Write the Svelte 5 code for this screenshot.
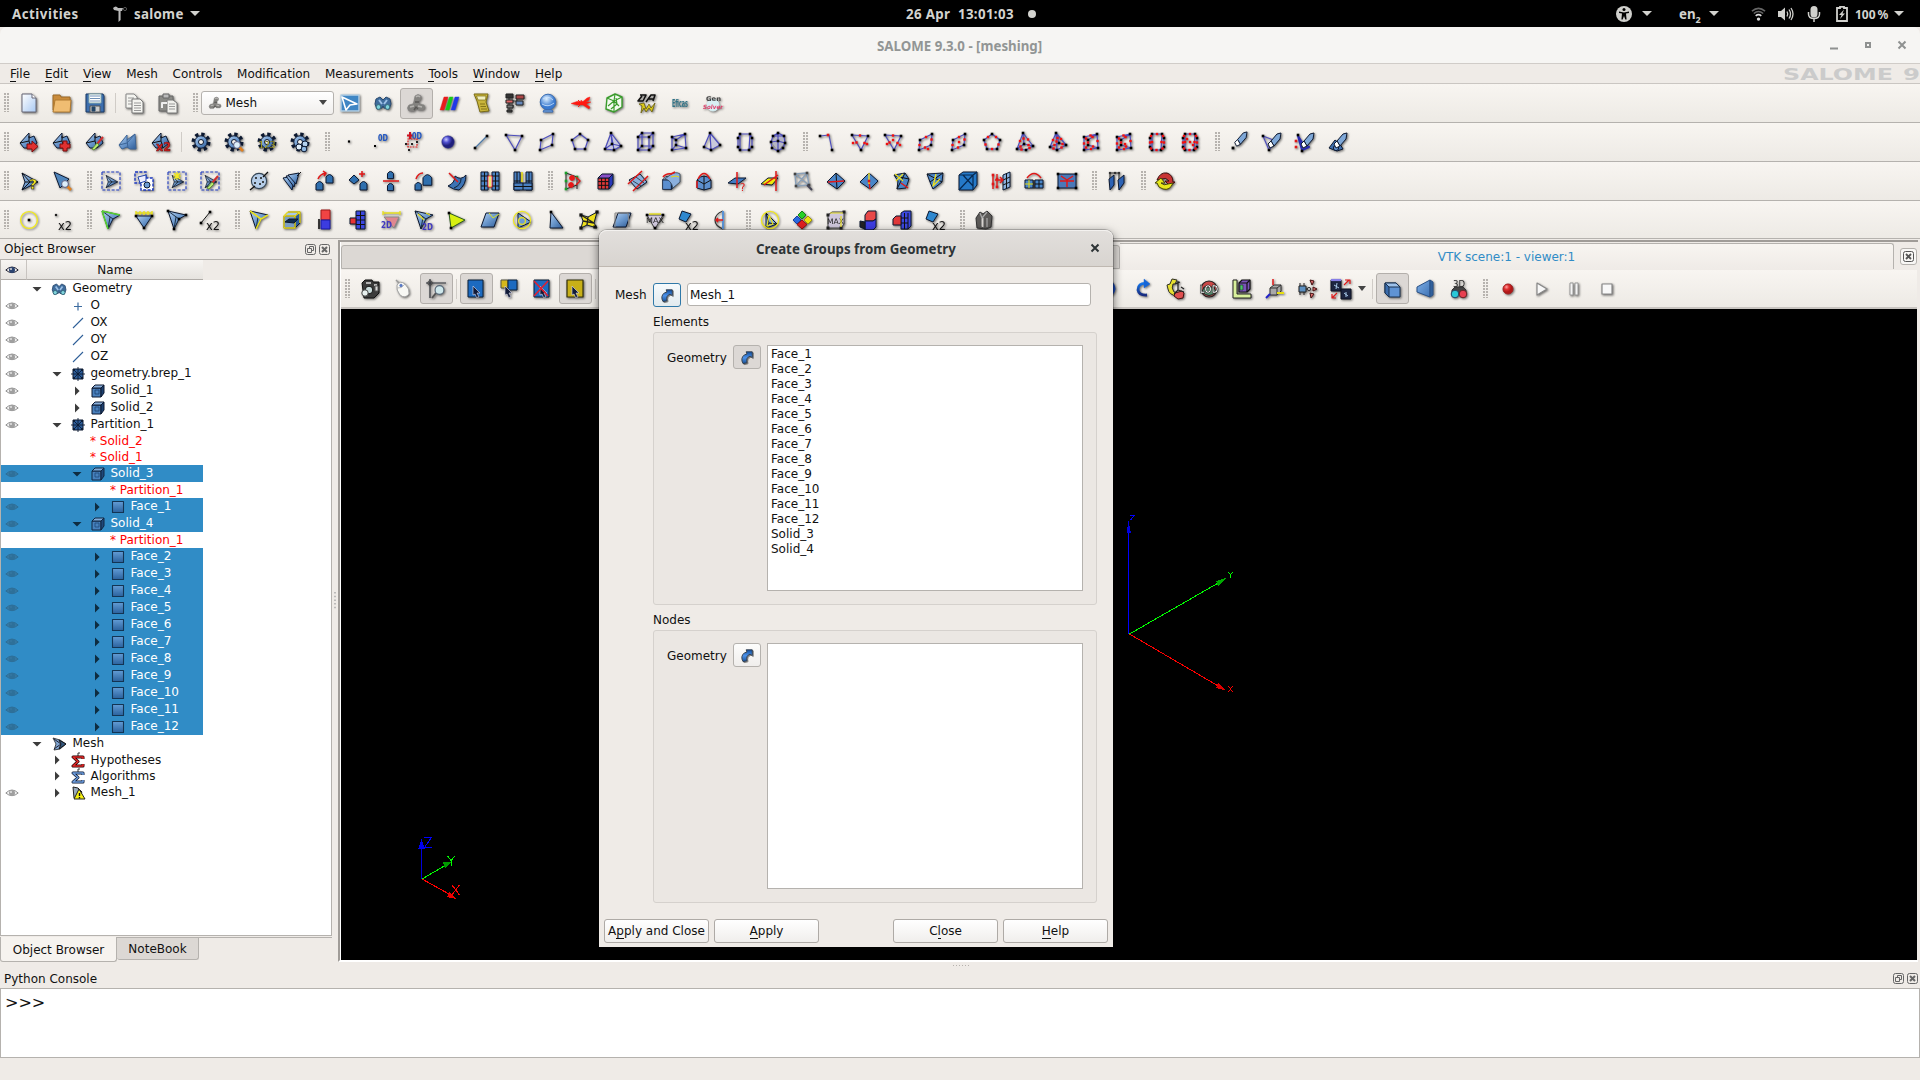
<script lang="ts">
  type Pt = [number, number];

  const B = 'url(#gBlue)';
  const p = (d: string, f = B, s = '#0c1830', w = 1) =>
    `<path d="${d}" fill="${f}" stroke="${s}" stroke-width="${w}" stroke-linejoin="round"/>`;
  const l = (d: string, s = '#111', w = 1) => p(d, 'none', s, w);
  const c = (x: number, y: number, r: number, f = B, s = '#0c1830', w = 1) =>
    `<circle cx="${x}" cy="${y}" r="${r}" fill="${f}" stroke="${s}" stroke-width="${w}"/>`;
  const t = (x: number, y: number, txt: string, size: number, f = '#111', extra = '') =>
    `<text x="${x}" y="${y}" font-size="${size}" fill="${f}" ${extra}>${txt}</text>`;
  const fit = (w: number) => `textLength="${w}" lengthAdjust="spacingAndGlyphs"`;
  const dots = (pts: Pt[], f = '#000', r = 1.3) =>
    pts.map(([x, y]) => `<rect x="${x - r}" y="${y - r}" width="${2 * r}" height="${2 * r}" fill="${f}"/>`).join('');

  // Wireframe element: black corner nodes, optional red mid-side nodes
  function wf(pts: Pt[], edges: string, quad = false, extra: Pt[] = []) {
    const es = edges.split(' ').map((e) => [pts[+e[0]], pts[+e[1]]]);
    const lines = es.map(([a, b]) => `M${a[0]} ${a[1]}L${b[0]} ${b[1]}`).join('');
    const mids = quad ? es.map(([a, b]) => [(a[0] + b[0]) / 2, (a[1] + b[1]) / 2] as Pt) : [];
    return l(lines, '#4d4dbd', 1.2) + dots(pts) + dots([...mids, ...extra], '#f01010', 1.2);
  }

  const TRI: Pt[] = [[2, 3], [18, 4], [11, 18]];
  const QUAD: Pt[] = [[4, 8], [16, 2], [15, 13], [3, 18]];
  const PENT: Pt[] = [[10, 2], [18, 8], [15, 17], [5, 17], [2, 8]];
  const TET: Pt[] = [[8, 1], [18, 14], [11, 18], [2, 17], [9, 12]];
  const HEX: Pt[] = [[2, 5], [13, 5], [13, 18], [2, 18], [6, 1], [17, 1], [17, 14], [6, 14]];
  const PRI: Pt[] = [[3, 5], [16, 2], [17, 16], [3, 18], [7, 8], [7, 13]];
  const HEXP: Pt[] = [[5, 2], [15, 2], [17, 6], [17, 15], [14, 18], [5, 18], [3, 15], [3, 6]];
  const HE = '01 12 23 30 45 56 67 74 04 15 26 37';
  const PE = '01 12 23 30 04 14 45 35 25';
  const TE = '01 12 23 30 02 04 14 34';
  const XE = '01 12 23 34 45 56 67 70 05 14';

  const blob = p('M1 11L10 1L10 6L15 4L18 11L12 16L5 16Z') + l('M1 11L10 9L10 4M10 9L12 16');
  const plane = p('M3 2L19 11L3 19L6 11Z') + l('M6 11L19 11M3 2L11 11L3 19');
  const gear =
    `<circle cx="10" cy="10" r="7.4" fill="none" stroke="#0c1830" stroke-width="4.2" stroke-dasharray="3.1 2.71"/>` +
    c(10, 10, 6.2) + c(10, 10, 2.5, '#f5f2ee');
  const glass = l('M15 15L19 19', '#e08020', 2.6) + c(13, 13, 3.4, '#dceefa', '#557', 0.9);
  const eraser = p('M9 9L15 2L19 1L18 7L12 14Z', '#7fa8d8') + p('M9 9L12 14L8 16L6 12Z', '#fff');
  const brush = l('M18 5L12 12', '#d03030', 2) + p('M12 11L14 13L9 18L7 17Z', '#b8e870', '#4a8020', 0.7);
  const frame = `<rect x="1" y="1" width="18" height="18" fill="none" stroke="#1c38c0" stroke-width="1.1" stroke-dasharray="3 1.6"/>`;
  const small = `<g transform="translate(3 3) scale(.72)">${plane}</g>`;
  const dome = (x: number, y: number, s = 1) =>
    p(`M${x} ${y + 9 * s}V${y + 3 * s}Q${x + 3.5 * s} ${y - 2 * s} ${x + 7 * s} ${y + 3 * s}V${y + 9 * s}Z`, '#2f6fae');
  const redArrow = (d: string) => l(d, '#e01818', 1.5);
  const tri3 = p('M1 1L19 5L12 9L7 19Z') + l('M1 1L12 9M7 19L9 7', '#123', 0.9);
  const vtri = p('M2 6H18L10 18Z');
  const lean = p('M6 3H19L14 17H1Z');
  const x2 = (x = 6, y = 19) => t(x, y, 'x2', 13, '#111', fit(14));
  const grid = (f: string, x: number, y: number, w: number, h: number) =>
    p(`M${x} ${y}h${w}v${h}h${-w}z`, f) + l(`M${x + w / 2} ${y}v${h}M${x} ${y + h / 2}h${w}`);
  const cube = (f = '#5b8fd0') =>
    p('M2 6H13V18H2Z', f) + p('M2 6L6 2H18L13 6Z', '#a9c8ec') + p('M13 6L18 2V13L13 18Z', '#2b5c9c');
  const cell = (inner: string, dx: number, dy: number, s: number) => `<g transform="translate(${dx} ${dy}) scale(${s})">${inner}</g>`;
  const cursor = (x: number, y: number) =>
    p(`M${x} ${y}L${x + 7} ${y + 7}H${x + 4}L${x + 6} ${y + 11}L${x + 3.5} ${y + 11.5}L${x + 2} ${y + 8}L${x} ${y + 9}Z`, '#111a38', '#dde', 0.6);

  const I: Record<string, string> = {
    new: p('M3 1H13L17 5V19H3Z', 'url(#gPage)', '#667') + p('M13 1V5H17', '#fff', '#667'),
    open: p('M1 2H8L9 4H18V17H1Z', '#c98b3b', '#9c6a28') + p('M3 7H19L18 19H1Z', '#f0bd72', '#b07a30'),
    save: p('M1 1H18L19 3V19H1Z', '#3d6fae', '#1b3b66') + p('M4 1H16V10H4Z', '#fff', '#8aa') + l('M5 3H15M5 5.5H15M5 8H15', '#7090b8') + p('M5 13H15V19H5Z', '#ccc', '#555') + p('M7 14H10V18H7Z', '#246', '#246'),
    copy: p('M1 1H9L12 4V15H1Z', '#f4f4f0', '#888') + l('M3 5H9M3 8H9M3 11H7', '#999') + p('M7 6H15L18 9V20H7Z', '#f4f4f0', '#777') + l('M9 10H16M9 12.5H16M9 15H16M9 17.5H16', '#999'),
    paste: p('M1 3H15V18H1Z', '#8b8b87', '#666') + p('M5 1H11V5H5Z', '#bbb', '#666') + p('M9 7H15L19 10V20H9Z', '#f0f0ec', '#777') + l('M11 11H17M11 13.5H17M11 16H17', '#999') + l('M4 15V10H9', '#eee', 2),
    shaper: p('M1 2H19V18H1Z', '#3f86c4', '#b5cfe4', 1.4) + p('M2 4L17 11L10 12L6 17Z', 'none', '#fff', 1.6),
    geom: p('M3 6L7 4L10 7L13 4L17 6L18 11L16 16L11 15L10 13L9 15L4 16L2 11Z', '#3f6c9c', '#2a4a70') + c(5.5, 14, 2.4, '#7fd3dc', '#367') + c(14.5, 14, 2.4, '#7fd3dc', '#367') + l('M6 7L9 11M14 7L11 11', '#9cc0e6', 2),
    mesh: p('M9 3Q12 0 15 3Q16 6 13 8L13 11L18 12Q20 15 17 17H12L10 15L8 18H3Q0 15 3 12L7 11L8 8Z', '#83827f', '#83827f', 0.6) + l('M10 4Q12 2 14 4M4 14L8 13M12 13L16 14', '#b5b3b0', 1.6) + l('M9 9L13 9M8 17L10 14L12 16', '#595755', 1.4),
    para: p('M5 4H9L5 17H1Z', '#e81c1c', '#e81c1c', 0.4) + p('M10.5 4H14L10 17H6.5Z', '#18c818', '#18c818', 0.4) + p('M16 4H20L16 17H12Z', '#2038e8', '#2038e8', 0.4),
    calc: p('M2 1H16L14 9L17 18L8 19L5 8Z', '#c9b53b', '#7a6c16') + p('M4.5 3H14L13.500 7H6Z', '#f0efc0', '#7a6c16', 0.7) + l('M8 11H13M8.500 13.5H14M9 16H15', '#857518', 1.1),
    yacs: l('M4 4V18M4 8H12M4 13H9M12 4H17M12 9V4', '#333') + p('M1 1H8V5H1Z', '#333', '#222') + p('M11 2H19V6H11Z', '#a44', '#222') + p('M1 7H8V10H1Z', '#d66', '#222') + p('M11 8H18V12H11Z', '#68b', '#222') + p('M2 12H8V15H2Z', '#777', '#222') + p('M2 17H7V19H2Z', '#444', '#222'),
    globe: c(10, 9, 7.8, 'url(#gBall)', '#3a6db4') + l('M5 6Q10 2 15 7M4 11Q10 15 16 10', '#cfe6ff', 0.8) + p('M6 17H14L15 19H5Z', '#7da7dd', '#3a6db4'),
    cray: p('M0 10.5L6 8.500L12 8.5L16 5L19 4L18 7L15 9L20 9L15 11L19 14L18 16L12 12L6 12Z', '#ff1a12', '#ff1a12', 0.4) + l('M7 7L9 9M7 14L10 11M10 7L11 9', '#ff1a12'),
    hexo: p('M3 5L11 1L18 4V14L10 19L2 16Z', '#f4faf0', '#3a9c2c', 1.4) + l('M3 5L10 8L18 4M10 8V19M11 1L10 8M4 13L10 8L15 13M7 16L13 11L12 5', '#3a9c2c', 1.2),
    da: l('M3 2H9L6 8H1L5 3M9 9L14 2H18L16 8M11 6H16', '#111', 1.6) + p('M2 11L7 10L9 16L12 11L14 15L18 10L15 19L12 15L9 19L7 15L4 20L5 13Z', '#d8c81a', '#5c5208', 0.7),
    eficas: t(2, 14, 'Eficas', 11, '#2f7286', fit(16) + ' font-weight="bold"'),
    gen: c(10, 12, 6, '#d8f0f4', '#d8f0f4') + t(3, 8, 'Gen', 6.5, '#444', fit(15) + ' font-weight="bold"') + t(0, 15.5, 'Solver', 5.8, '#e0406c', fit(20) + ' font-weight="bold" font-style="italic"'),

    mCreate: blob + p('M8 12H13V9L19 14.5L13 20V17H8Z', '#e03030', '#7a0c0c'),
    mSub: blob + p('M11 9H15V12H18V16H15V19H11V16H8V12H11Z', '#e03030', '#7a0c0c'),
    mEdit: blob + brush,
    mBuild: p('M1 13L9 3V8L17 2L18 17H12L9 15L4 17Z', B, '#3c6496') + l('M9 8L10 16M1 13L9 11L17 2', '#3c6496'),
    mCopy: blob + t(5, 19, 'x2', 12, '#d42020', fit(15) + ' font-weight="bold" stroke="#5a0808" stroke-width=".4"'),
    gear, gearFind: gear + glass,
    gear123: gear + t(1.5, 16, '123', 9.5, '#f6f020', fit(17) + ' stroke="#333" stroke-width=".3"'),
    gearBall: gear + c(9, 15, 3, '#dcecfa') + c(15, 12, 3, '#b5d2ee') + c(14, 17, 2.8, '#8fb8e2'),
    node: dots([[10, 9.5]], '#000', 1.1),
    od: dots([[3, 14]], '#000', 1) + t(6, 9, '0D', 9.5, '#1f55c4', fit(10) + ' font-weight="bold"'),
    od2: l('M5 0V7M2 3.5H8', '#d01020', 2) + t(7, 7, '0D', 9.5, '#1f55c4', fit(10) + ' font-weight="bold"') + `<rect x="3" y="7" width="9" height="8" fill="none" stroke="#e01818" stroke-width="1.2" stroke-dasharray="1.8 1"/>` + dots([[1, 12], [7, 12], [4, 18], [12, 10]], '#222', 1),
    ball: c(10, 10, 6.2, 'url(#gNavy)', '#2a2a88', 0.5),
    edge: l('M4 16L16 4', '#4d79a8', 1.3) + dots([[4, 16], [16, 4]]),
    tri: wf(TRI, '01 12 20'), quad: wf(QUAD, '01 12 23 30'), pent: wf(PENT, '01 12 23 34 40'),
    tet: p('M8 1L18 14L11 18L2 17Z', '#c9c9dc', '#888', 0.4) + wf(TET, TE), hexa: wf(HEX, HE), pri: wf(PRI, PE),
    pyr: p('M8 1L18 13L9 18Z', '#c9c9dc', '#888', 0.4) + wf([[8, 1], [18, 13], [9, 18], [2, 15]], '01 12 23 30 02'),
    hexp: wf(HEXP, XE), poly: p('M10 1L16 4L17 11L10 19L3 10Z', '#b5b5c4', '#888', 0.4) + wf([[10, 1], [16, 4], [17, 11], [15, 16], [10, 19], [4, 16], [3, 10], [5, 4], [10, 9]], '01 12 23 34 45 56 67 70 08 28 48 68 17'),
    qEdge: l('M3 4L12 3L15 18', '#4d4dbd', 1.2) + dots([[3, 4], [15, 18]]) + dots([[11, 3]], '#e01818'),
    qTri: wf(TRI, '01 12 20', true, [[17, 12], [3, 11]]), bTri: wf(TRI, '01 12 20', true, [[10, 8], [17, 13], [4, 12]]),
    qQuad: wf(QUAD, '01 12 23 30', true, [[12, 17]]), bQuad: wf(QUAD, '01 12 23 30', true, [[10, 10]]), qPent: wf(PENT, '01 12 23 34 40', true),
    qTet: wf(TET, '01 12 23 30 04 14 34', true), qPyr: wf([[8, 1], [18, 13], [9, 18], [2, 15], [11, 11]], TE, true),
    qPri: wf(PRI, PE, true), bPri: wf(PRI, PE, true, [[11, 12]]), qHex: wf(HEXP, XE, true), bHex: wf(HEXP, XE, true, [[10, 10], [7, 7], [13, 13]]),
    rmNode: cell(eraser, 0, -1, 0.95) + dots([[4, 16]], '#000', 1.4),
    rmElem: l('M1 4L14 9L7 18Z', '#4d4dbd', 1.2) + dots([[1, 4], [7, 18]]) + eraser,
    rmGroup: l('M3 4L8 12L14 15L7 18Z', '#2a2ab0', 2) + dots([[1, 9], [1, 15]], '#e01818') + dots([[3, 3], [7, 19]]) + eraser,
    rmAll: p('M1 16L7 8L12 12L15 17L9 19Z', '#3f6fae') + c(8, 16, 2.6, '#5f8fce') + eraser,

    info: plane + t(10, 18, '?', 14, '#f4e820', 'font-weight="bold" stroke="#222" stroke-width=".5"'),
    find: p('M2 1L17 8L8 17Z', '#4f86bd') + glass,
    grp: frame + small,
    grpGeo: `<rect x="1" y="1" width="11" height="11" fill="none" stroke="#1c38c0" stroke-width="1.4" stroke-dasharray="3 1.4"/><rect x="7" y="7" width="12" height="12" fill="#fff" stroke="#1c38c0" stroke-width="1.4" stroke-dasharray="3 1.4"/>` + p('M4 6L12 4V10L6 12Z', '#eef', '#24a') + c(13, 14, 3, '#6c9bd4'),
    grpNew: frame + small + l('M10 1V9M6 5H14M7 2L13 8M13 2L7 8', '#f2ea20', 1.2),
    grpEdit: frame + small + brush,
    sphere: c(10, 10, 7.6, '#b5cde8', '#345', 1.1) + dots([[7, 7], [12, 7], [6, 12], [11, 13], [14, 11]], '#222', 0.9) + l('M14 6L19 1M6 15L1 19', '#111', 1.3),
    layers: p('M1 7L13 5L10 19Z') + p('M4 5L15 4L12 16Z') + p('M6 4L17 2L14 13Z') + l('M15 5L19 1'),
    mv: dome(1, 10) + dome(11, 3) + redArrow('M3 8Q5 3 11 2M8 0L11 2L9 5'),
    mv2: p('M1 9L6 4L11 9L6 13Z', '#2f6fae') + dome(12, 10) + redArrow('M14 0V6M11 3H17'),
    mir: dome(6.5, 0, 0.85) + dome(6.5, 12, 0.85) + redArrow('M2 10H18'),
    scale: dome(1, 11, 0.9) + dome(9, 3, 1.25) + redArrow('M2 8Q4 2 9 2'),
    sew: p('M8 5Q14 10 19 4Q19 14 12 19Q7 19 1 15Q8 12 8 5Z', '#3c73b4') + l('M14 8Q14 14 7 17', '#123') + redArrow('M2 2L11 11'),
    g1: grid('#4a80c0', 1, 1, 7, 18) + grid('#4a80c0', 12, 1, 7, 18) + l('M1 5H8M1 15H8M12 5H19M12 15H19') + p('M8 5H12V16H8Z', '#fff', '#e01818', 0.9) + l('M10 5V16', '#e4da10', 1.2),
    g2: grid('#4a80c0', 1, 1, 6, 18) + grid('#4a80c0', 13, 1, 6, 18) + grid('#4a80c0', 1, 12, 18, 7) + l('M9 1V11', '#e4da10', 1.6),
    dup: l('M4 2V18M4 2L15 6V18M4 18L15 14', '#222') + dots([[4, 2], [4, 10], [4, 18], [15, 6]], '#18a028') + c(10, 7, 2.4, '#e81818', '#e81818') + c(9, 14, 2.4, '#e81818', '#e81818') + redArrow('M14 6L18 10L14 14'),
    split: p('M3 7H14V18H3Z', '#e03838') + l('M3 10.6H14M3 14.3H14M6.6 7V18M10.3 7V18') + p('M3 7L7 3H18L14 7Z', '#8a50c8') + p('M14 7L18 3V13L14 18Z', '#2838b8'),
    cutx: p('M1 9L12 3L19 11L9 18Z', '#8ab0dc') + redArrow('M0 13L14 0M5 20L20 5') + l('M5 10L13 15M8 6L16 12', '#345'),
    ext: cell(cube(), 0, 4, 0.8) + p('M9 4Q15 0 19 3V11L12 17Q10 9 4 8Z', '#8bb0de', '#345', 0.8) + redArrow('M2 6Q5 2 11 3M14 1L10 3') + l('M10 6Q16 4 18 6', '#e4da10'),
    rev: p('M3 9Q10 1 17 9V17L10 19L3 17Z', '#5c8fce') + l('M10 5V19M3 9L10 13L17 9') + redArrow('M4 8Q10 -3 16 8M3 10V17'),
    plq: p('M1 12L8 7H19L11 13Z', '#3f7cc4') + redArrow('M10 1V17') + t(13, 20, '?', 10, '#e01818'),
    ply: p('M1 13L8 7H18L12 14Z', '#eee80c') + redArrow('M16 0V20M4 14L18 4'),
    wq: l('M2 3L14 2L16 14L3 15ZL16 14M14 2L3 15', '#8aa0b8', 1.4) + dots([[2, 3], [14, 2], [16, 14], [3, 15]], '#444') + l('M14 14L19 19', '#445', 1.8),
    dia: p('M1 11L10 2L19 10L11 18Z', '#4a86c8') + l('M10 2L11 18') + redArrow('M2 11L18 10'),
    dia2: p('M1 11L10 2L19 10L11 18Z', '#4a86c8') + redArrow('M11 18L10 10') + l('M10 2V13', '#eee020', 1.4) + dots([[10, 10]], '#e01818'),
    un: p('M2 4L13 2L17 8L14 17L5 18L6 10Z', '#4a86c8') + l('M3 5L17 8M13 2L5 18') + l('M3 3L11 10M11 3L4 10', '#eee020', 1.3) + redArrow('M9 12L16 17'),
    un2: p('M2 3L18 2L17 11L8 18L5 11Z', '#4a86c8') + l('M2 3L17 11M18 2L5 11') + l('M11 3L8 15L15 8', '#eee020', 1.3),
    cut: p('M1 4L5 1H19V14L15 19H1Z', '#2579c8') + l('M1 4H15V19M15 4L19 1M1 19L15 4M5 4L15 15', '#062850', 1.2),
    pat: p('M12 4L19 1V16L12 19Z', '#8ab0dc') + l('M12 9L19 6M12 14L19 11M15.5 3V17') + l('M2 4V18M6 3V16', '#e01818', 1.4) + redArrow('M4 9H12M9 6L12 9L9 12') + dots([[2, 4], [6, 8], [2, 13], [6, 16]], '#e01818'),
    symm: p('M1 9L9 9V17H1ZM11 9H19V17H11Z', '#4a86c8') + l('M1 13H9M5 9V17', '#e4da10') + l('M15 9V17M11 13H19') + redArrow('M3 7Q10 -2 17 7') + l('M10 9V18'),
    lay: p('M1 3H19V17H1Z', '#4a78b8') + dots([[1, 3], [19, 3], [1, 17], [19, 17]]) + redArrow('M4 5L10 9L16 5M10 9V16M3 10H17'),
    sideA: p('M3 8L8 4V14L4 19Z', '#2c62b4') + p('M12 9L18 4V12L13 19Z', '#2c62b4') + l('M4 2V7M4 2H13V8', '#333', 1.1) + dots([[4, 2], [9, 2], [13, 2]], '#333', 1.1),
    upd: p('M2 9Q5 1 12 2Q18 4 18 11H20L15 15L10 10H14Q11 6 7 8Z', '#c83434', '#3a0c0c') + p('M18 12Q15 20 8 18Q3 17 2 12H0L6 7L10 12H6Q9 15 13 13Z', '#e6e81c', '#44440a'),

    free: c(10, 10, 8.4, 'none', '#f2ea20', 1.4) + dots([[10, 10]], '#000', 1.3),
    dbl: dots([[4, 5]], '#222', 1.1) + x2(6, 20),
    fb: tri3 + l('M1 1L19 5M1 1L7 19', '#58d030', 1.6), fb2: vtri + l('M2 3H18M2 1V5M6 1V5M10 1V5M14 1V5M18 1V5', '#e8e020', 1.4) + dots([[2, 6], [18, 6], [10, 18]]),
    fb3: tri3 + dots([[1, 1], [19, 5], [7, 19], [12, 9]]), e2: l('M1 13L10 2') + dots([[1, 13], [10, 2]]) + x2(6, 20),
    ff: tri3 + l('M1 1L12 9L19 5M7 19L12 9', '#e8e020', 1.6),
    bare: cube('#7c9ec4') + l('M2 6H13V18H2ZM6 2H18V13M2 6L6 2M13 6L18 2', '#e8d820', 1.4) + p('M3 12L7 9H16L12 13Z', '#122c4c'),
    over: p('M6 0H15V10H6Z', '#f04444', '#a01818') + p('M6 10H15V19H6Z', '#3c3ce0', '#1818a0') + l('M4 9V19', '#111', 1.6),
    col: grid('#3c48e0', 8, 1, 9, 18) + l('M8 5.500H17M8 14.500H17') + p('M2 8H8V14H2Z', '#e83434'),
    len: p('M3 7H18L13 18Z', '#e08890', '#888') + l('M2 3H19M2 1V5M19 1V5', '#e8e020', 1.3) + t(0, 18, '2D', 9.5, '#4038c0', fit(11) + ' font-weight="bold"'),
    len2: tri3 + l('M4 4L10 10M12 3L16 5', '#e8e020', 1.3) + t(8, 20, '2D', 9.5, '#4038c0', fit(11) + ' font-weight="bold"'),
    area: p('M2 3L18 10L4 18Z', '#d8f010', '#2c5c20') + dots([[2, 3], [4, 18]]),
    tap: lean + l('M9 3L13 8L19 4', '#d8e020'), asp: p('M5 3L18 12L5 18Z', '#6c9bd4') + c(9, 11, 3.4, 'none', '#e8e020', 1.3) + c(9, 10, 8.6, 'none', '#f0e820', 1.2),
    ang: p('M5 2L17 18H4Z') + dots([[5, 2]]), warp: p('M2 5L9 7L18 2L15 13L18 18L8 15L2 18L4 11Z', '#eee01c') + l('M4 11L15 13M9 7L8 15M2 5L15 13', '#222', 1.3) + dots([[2, 5], [18, 2], [16, 17], [2, 18]], '#111', 1.6),
    skew: lean + l('M3 3H16L17 17M3 3V17', '#888'), max: p('M2 5H18L10 19Z', '#cfc7dc', '#444') + dots([[2, 5], [18, 5], [10, 18]]) + t(1, 13, 'MAX', 7.5, '#222', fit(18)) + l('M4 4H16', '#e8e020', 1.4),
    eq: p('M4 1L13 4L8 12L1 9Z', '#2e88d0') + x2(7, 20), def: l('M12 1Q4 4 4 10T12 19', '#333', 1.2) + l('M12 1V19', '#5a92d4', 2) + redArrow('M5 10H12M7 8L5 10L7 12'),
    vol: p('M6 3L17 14L6 18Z', '#7ca8dc') + l('M6 3L9 13L17 14M6 18L9 13') + c(10, 10, 8.6, 'none', '#f0e820', 1.3) + l('M9 5L13 14L7 16Z', '#e8e020', 1.2),
    asp3: p('M9 1L13 5L9 9L5 5Z', '#28d028', '#168016') + p('M4 6L8 10L4 14L0 10Z', '#2868e0', '#1840a0') + p('M15 6L19 10L15 14L11 10Z', '#eee010', '#a09808') + p('M9 10L14 14.5L9 19L4 14.5Z', '#e02020', '#901010'),
    max3: p('M2 5L6 2H18V14L15 18H2Z', '#cfc7dc', '#444') + dots([[2, 5], [18, 2], [15, 18], [2, 18]], '#222', 1.5) + t(1, 14, 'MAX', 7.5, '#222', fit(17)) + l('M4 3H17M15 6V17', '#e8e020', 1.2),
    ov3: p('M6 5L9 1H17V9L14 11H6Z', '#e84848') + p('M6 11H14L17 9V17L14 20H6Z', '#3c3ce0') + p('M1 11L6 12V19L1 17Z', '#222'),
    mc3: p('M9 3L12 1H19V16L16 19H9Z', '#3c48e0') + l('M9 8H16M9 13H16M16 3V19M12.5 3V19') + p('M1 9L4 6H9V15H1Z', '#e03838'),
    bag: p('M2 8L6 2L9 4L13 1L18 6L17 17L12 19L3 18Z', '#5c5a58', '#333') + p('M7 8L10 7V18L7 17Z', '#d8d4d0', '#555') + l('M6 3L8 8L13 2M13 8V17', '#aaa', 1.2),

    cam: p('M2 4L5 1H12L13 3H19V14L14 19H4Z', '#3b3b3b', '#111') + l('M6 4H11M14 6L17 6', '#ddd', 1.6) + c(9, 11, 3.8, '#cdd', '#111') + c(5, 14, 3.2, '#e8f0ee', '#444') + p('M15 7H18V12H15Z', '#d8d8d8', '#555'),
    mouse: l('M6 4L3 1', '#999', 1.4) + p('M4 6Q7 1 12 5Q17 10 16 15Q12 20 7 16Q3 11 4 6Z', '#f8f8f4', '#a4a4a4') + l('M4 9Q9 10 12 5', '#bbb') + c(8, 6.5, 1.3, '#5b7ed0', '#3858a8', 0.5),
    zoomax: l('M4 0V19M0 4H20', '#2c3038', 1.2) + c(4, 4, 2.2, 'none', '#444') + l('M10 14L6 19', '#555', 2) + c(13.5, 11, 4.4, '#cfe8ec', '#567', 1.1),
    sel: p('M2 1H17V18H2Z', '#1c6ac0', '#0c2038') + cursor(7, 7), sel2: p('M2 1H9V9H2Z', '#d4b81c', '#554') + p('M9 1H18V11H9Z', '#1c6ac0', '#0c2038') + cursor(6, 7),
    selx: p('M2 1H17V18H2Z', '#1c6ac0', '#0c2038') + cursor(8, 7) + l('M2 2L16 17M16 2L2 17', '#e02030', 1.6), sely: p('M2 1H18V18H2Z', '#c8b018', '#33300c', 1.2) + cursor(7, 7),
    ccw: l('M5 4Q13 1 14 10Q13 16 7 17', '#1848b8', 3), cw: l('M13 4.5Q5 4 5 11Q6 16.5 14 16', 'url(#gRot)', 2.8) + p('M11 0L17 5L11 9Z', '#1466d8', '#1466d8', 0.4),
    rotp: p('M6 0L11 1L9 5L7 5Q5 9 8 13L12 14L11 17Q3 16 2 10L1 6L4 5Z', '#e8e030', '#332') + p('M9 14L16 12L18 14L17 19L12 20L8 17Z', '#e05050', '#411') + l('M12 2V11L8 15M12 11L18 13M9 5L14 3M15 8L18 10', '#222', 1.2),
    lod: c(10, 10, 8, '#c94848', '#222', 1.2) + p('M3 13Q10 20 17 13L15 8H5Z', '#5a8a70', '#222') + t(0.5, 14, 'LOD', 10, '#fff', fit(19) + ' font-weight="bold" stroke="#111" stroke-width=".6"'),
    rule: p('M1 1H5V15H19V19H1Z', '#d8f09c', '#222') + p('M7 4L10 1H18V10L15 13H7Z', '#7a54b8', '#111', 1.2) + l('M7 4H15V13M15 4L18 1', '#111', 1.2) + p('M8 6H11V11H8Z', '#48c868', '#222', 0.6),
    trih: p('M5 9L9 6H16V12L12 16H5Z', '#a8a8a8', '#333') + l('M5 9H12V16M12 9L16 6', '#333') + redArrow('M8 0V6') + l('M12 14H19', '#e8e010', 2) + l('M5 15L1 19', '#2020c8', 2),
    dev: p('M1 7H8V13H1Z', '#5c8fc0', '#222') + l('M2 4V7M6 4V7M2 13V16M6 13V16M8 10H11', '#222') + p('M12 1L16 2L14 6Z', '#e07070', '#411') + p('M15 8L19 10L15 12Z', '#e07070', '#411') + p('M12 14L16 15L13 19Z', '#e07070', '#411') + c(11, 10, 1.6, '#ccc', '#333'),
    views: p('M0 1H10V12H0Z', '#1c2440', '#0c1020') + p('M0 0H10V2H0Z', '#8880e8', '#8880e8', 0.2) + p('M10 10H20V20H10Z', '#1c2440', '#0c1020') + l('M3 6L8 9M6 4L5 10M13 14L17 17M15 13V18', '#a8c8e8', 1) + l('M13 6L18 1M14 1H19V5M6 14L1 19M1 15V19H5', '#e01818', 1.2),
    box: p('M2 4H13L17 8V18H6L2 14Z', '#5f93d4', '#183050') + p('M2 4H13L17 8H6Z', '#9dc1ea', '#183050') + p('M2 4L6 8V18L2 14Z', '#3a6cac', '#183050'),
    box2: p('M1 8L14 1V18L1 13Z', 'url(#gBlue2)', '#2a5288') + p('M14 1L17 3V16L14 18Z', '#30609c', '#2a5288'),
    ste: t(4, 8, '3D', 9, '#222', fit(12)) + p('M3 11L6 8H14L17 11V14H3Z', '#444', '#333') + c(6, 15, 3.8, '#28c8d8', '#246') + c(14, 15, 3.8, '#e84050', '#622'),
    rec: c(10, 10, 5, 'url(#gRed)', '#a02020'), play: p('M6 4L16 10L6 16Z', '#f8f8f8', '#888', 1.2), pause: p('M6 4H9V16H6ZM11 4H14V16H11Z', '#f4f4f4', '#999', 1), stop: p('M5 5H15V15H5Z', '#f8f8f8', '#888', 1.2)
  };

  type Cell = string;
  // "|" is a separator, ":" a drag handle, "!" prefix marks a checked tool, "@" the module selector
  const rows: Cell[][] = [
    ': new open save | copy paste : @ shaper geom !mesh para calc yacs globe cray hexo da eficas gen',
    ': mCreate mSub mEdit mBuild mCopy | gear gearFind gear123 gearBall : node od od2 ball edge tri quad pent tet hexa pri pyr hexp poly : qEdge qTri bTri qQuad bQuad qPent qTet qPyr qPri bPri qHex bHex : rmNode rmElem rmGroup rmAll',
    ': info find : grp grpGeo grpNew grpEdit : sphere layers mv mv2 mir scale sew g1 g2 : dup split cutx ext rev plq ply wq dia dia2 un un2 cut pat symm lay : sideA : upd',
    ': free dbl : fb fb2 fb3 e2 : ff bare over col len len2 area tap asp ang warp skew max eq def : vol asp3 max3 ov3 mc3 eq : bag'
  ].map((r) => r.split(' '));
  const vtk: Cell[] = ': cam mouse !zoomax | !sel sel2 selx !sely | _ ccw cw rotp lod rule trih dev views v | !box box2 ste : rec play pause stop'.split(' ');

  const menus = ['_File', '_Edit', '_View', 'Mesh', 'Controls', 'Modification', 'Measurements', '_Tools', '_Window', '_Help'];

  const T: Record<string, string> = {
    geo: cell(I.geom, -0.5, -0.5, 0.86),
    pt: l('M8 4.5V12.5M4 8.5H12', '#3c6ca0', 1.2),
    ln: l('M3 13L13 3', '#2f5f98', 1.1),
    comp: p('M3 3H13V13H3Z', '#2c5c98') + l('M3 3L13 13M13 3L3 13M8 1V15M1 8H15', '#0c1c34', 0.9) + dots([[4, 4], [12, 4], [4, 12], [12, 12]], '#0c1c34', 1),
    solid: p('M2 5H11V14H2Z', '#4a80bc') + p('M2 5L5 2H14L11 5Z', '#8ab0dc') + p('M11 5L14 2V10L11 14Z', '#1c4070') + l('M5 7H9V11H5Z', '#1c4070', 0.8),
    face: p('M2.5 2.5H13.5V13.5H2.5Z', 'url(#gFace)', '#102844', 1.1),
    msh: p('M2 2L9 4L15 8L9 13L3 14L5 8Z', '#7fa4d0', '#222', 0.8) + p('M8 4L15 8L8 13L10 8Z', '#34587f', '#111', 0.9) + l('M3 3L10 8L3 13', '#223', 1),
    hyp: l('M8 4V1H10', '#333') + l('M13 7V5H3L8 9.5L3 14H13V12', '#200', 3) + l('M13 7V5H3L8 9.5L3 14H13V12', '#e02828', 1.6),
    alg: l('M8 4V1H10', '#333') + l('M13 7V5H3L8 9.5L3 14H13V12', '#0c1830', 3) + l('M13 7V5H3L8 9.5L3 14H13V12', '#6c9cdc', 1.6),
    warn: p('M3 2L8 3L12 7L9 12L4 13Z', '#9ab', '#222') + p('M9 4L15 14H4Z', '#f6f010', '#222') + l('M9.500 8V11M9.500 12V13.500', '#111', 1.4)
  };

  type Row = { n: string; d: number; i?: string; a?: 'o' | 'c'; eye?: boolean; sel?: boolean; h?: number };
  const tree: Row[] = [
    { n: 'Geometry', d: 0, i: 'geo', a: 'o' },
    { n: 'O', d: 1, i: 'pt', eye: true },
    ...['OX', 'OY', 'OZ'].map((n) => ({ n, d: 1, i: 'ln', eye: true })),
    { n: 'geometry.brep_1', d: 1, i: 'comp', a: 'o', eye: true },
    { n: 'Solid_1', d: 2, i: 'solid', a: 'c', eye: true },
    { n: 'Solid_2', d: 2, i: 'solid', a: 'c', eye: true },
    { n: 'Partition_1', d: 1, i: 'comp', a: 'o', eye: true },
    { n: '* Solid_2', d: 1 },
    { n: '* Solid_1', d: 1 },
    { n: 'Solid_3', d: 2, i: 'solid', a: 'o', eye: true, sel: true },
    { n: '* Partition_1', d: 2 },
    { n: 'Face_1', d: 3, i: 'face', a: 'c', eye: true, sel: true },
    { n: 'Solid_4', d: 2, i: 'solid', a: 'o', eye: true, sel: true },
    { n: '* Partition_1', d: 2 },
    ...Array.from({ length: 11 }, (_, k) => ({ n: `Face_${k + 2}`, d: 3, i: 'face', a: 'c' as const, eye: true, sel: true })),
    { n: 'Mesh', d: 0, i: 'msh', a: 'o' },
    { n: 'Hypotheses', d: 1, i: 'hyp', a: 'c', h: 16 },
    { n: 'Algorithms', d: 1, i: 'alg', a: 'c', h: 16 },
    { n: 'Mesh_1', d: 1, i: 'warn', a: 'c', eye: true }
  ];

  const picked = [...Array.from({ length: 12 }, (_, k) => `Face_${k + 1}`), 'Solid_3', 'Solid_4'];
</script>

{#snippet bar(cells: Cell[])}
  {#each cells as k}
    {#if k === ':'}<i class="handle"></i>
    {:else if k === '|'}<i class="sep"></i>
    {:else if k === '_'}<i class="covered"></i>
    {:else if k === 'v'}<i class="drop"></i>
    {:else if k === '@'}
      <div class="combo"><svg class="ci" viewBox="0 0 20 20">{@html I.mesh}</svg><span>Mesh</span><i class="caret"></i></div>
    {:else}
      <div class="tool" class:on={k[0] === '!'}>
        <svg class="ic" viewBox="0 0 20 20">{@html I[k.replace('!', '')]}</svg>
      </div>
    {/if}
  {/each}
{/snippet}

{#snippet eye(dark: boolean)}
  <svg class="eye" class:dark viewBox="0 0 14 10">
    <path d="M.8 5Q7-1 13.2 5Q7 10.4.8 5Z" fill="#eee" stroke={dark ? '#223' : '#777'} />
    <circle cx="7" cy="5" r="3" fill={dark ? '#2c4470' : '#888'} /><circle cx="6" cy="4" r="1" fill="#ddd" />
  </svg>
{/snippet}

{#snippet dock()}
  <svg class="dock" viewBox="0 0 25 11">
    <g fill="none" stroke="#666">
      <rect x=".5" y=".5" width="10" height="10" rx="2" /><path d="M4.5 4.5V2.5H8.5V6.5H6.5M2.5 4.5H6.5V8.5H2.5Z" />
      <rect x="14.5" y=".5" width="10" height="10" rx="2" /><path d="M17 3L22 8M22 3L17 8" stroke-width="2" />
    </g>
  </svg>
{/snippet}

{#snippet pick(kind: string)}
  <div class="pick {kind}">
    <svg viewBox="0 0 16 16">
      <path d="M3.5 15Q0 9 5 5L8 4L7 1.5H14V8L11.5 6.5Q6.5 8 8 14Z" fill="url(#gPick)" stroke="#33404e" stroke-width="1.1" />
    </svg>
  </div>
{/snippet}

<svg class="defs" aria-hidden="true">
  <defs>
    <linearGradient id="gBlue" x2="1" y2="1"><stop stop-color="#b4d0f0" /><stop offset=".5" stop-color="#6a97cc" /><stop offset="1" stop-color="#2e5c98" /></linearGradient>
    <linearGradient id="gBlue2" x2="1" y2="1"><stop stop-color="#7fb0e8" /><stop offset="1" stop-color="#3d72b4" /></linearGradient>
    <linearGradient id="gFace" x2="0" y2="1"><stop stop-color="#6a9fd8" /><stop offset="1" stop-color="#2a5c98" /></linearGradient>
    <linearGradient id="gPage" x2="1" y2="1"><stop stop-color="#fff" /><stop offset="1" stop-color="#a9c9f2" /></linearGradient>
    <linearGradient id="gPick" x2="0" y2="1"><stop stop-color="#0f4c9c" /><stop offset=".5" stop-color="#4c92ea" /><stop offset="1" stop-color="#174f94" /></linearGradient>
    <linearGradient id="gRot" x2="0" y2="1"><stop stop-color="#1474e8" /><stop offset="1" stop-color="#182c80" /></linearGradient>
    <radialGradient id="gBall" cx=".4" cy=".3"><stop stop-color="#dcefff" /><stop offset="1" stop-color="#3a7ad0" /></radialGradient>
    <radialGradient id="gNavy" cx=".35" cy=".3"><stop stop-color="#c8c8ff" /><stop offset=".5" stop-color="#5050d0" /><stop offset="1" stop-color="#20207c" /></radialGradient>
    <radialGradient id="gRed" cx=".35" cy=".3"><stop stop-color="#ffa0a0" /><stop offset=".5" stop-color="#e03030" /><stop offset="1" stop-color="#b01818" /></radialGradient>
  </defs>
</svg>

<div class="screen">
  <header class="top">
    <span class="act">Activities</span>
    <svg class="app" viewBox="0 0 16 18"><path d="M1 3Q4 0 6 3H11L10 6L8.6 6V15L6.5 17V6L2 5Z" fill="#bbb" /><circle cx="13" cy="4" r="1.6" fill="none" stroke="#555" /></svg>
    <span class="appname">salome</span><i class="tri"></i>
    <div class="clock"><span>26 Apr&nbsp; 13:01:03</span><i></i></div>
    <div class="tray">
      <svg class="a11y" viewBox="0 0 16 16"><circle cx="8" cy="8" r="8" fill="#d0d0cc" /><circle cx="8" cy="3.6" r="1.5" /><path d="M3 5.5L8 6.5L13 5.5V7L10 7.6L10.6 13.5H9.3L8 10L6.7 13.5H5.4L6 7.6L3 7Z" /></svg>
      <i class="tri"></i>
      <span class="lang">en<sub>2</sub></span><i class="tri"></i>
      <svg class="wifi" viewBox="0 0 16 16"><path d="M1 5Q8-1 15 5M3 7.5Q8 3 13 7.5" fill="none" stroke="#666" stroke-width="1.6" /><path d="M5 10Q8 7.5 11 10" fill="none" stroke="#ddd" stroke-width="1.8" /><circle cx="8" cy="13.4" r="1.8" fill="#ddd" /></svg>
      <svg class="vol" viewBox="0 0 16 16"><path d="M0 5H3L7 1.5V14.5L3 11H0Z" fill="#d0d0cc" /><path d="M9 5.5Q10.5 8 9 10.5M11 3.5Q14 8 11 12.5M13 2Q17 8 13 14" fill="none" stroke="#d0d0cc" stroke-width="1.3" /></svg>
      <svg class="mic" viewBox="0 0 14 16"><rect x="3.5" y="0" width="7" height="11.500" rx="3.500" fill="#d0d0cc" /><path d="M1.5 6V8Q1.5 12.5 7 12.5T12.5 8V6M7 12.5V16" fill="none" stroke="#d0d0cc" stroke-width="1.5" /></svg>
      <svg class="bat" viewBox="0 0 12 16"><path d="M4 2V.8H8V2H11V15H1V2Z" fill="none" stroke="#d0d0cc" stroke-width="1.8" /><path d="M8 3.5L3 9H5.5L4 13L9 7.5H6.5Z" fill="#d0d0cc" /></svg>
      <span class="pct">100&thinsp;%</span><i class="tri"></i>
    </div>
  </header>

  <div class="title">
    <span>SALOME 9.3.0 - [meshing]</span>
    <svg viewBox="0 0 80 12"><path d="M0 9.5H8" stroke="#8f9190" stroke-width="2" /><rect x="36" y="4" width="4" height="4" fill="none" stroke="#8f9190" stroke-width="2" /><path d="M68.5 2.5L75.5 9.5M75.5 2.5L68.5 9.5" stroke="#8f9190" stroke-width="2" /></svg>
  </div>

  <nav class="menu">
    {#each menus as m}
      {#if m[0] === '_'}<span><u>{m[1]}</u>{m.slice(2)}</span>{:else}<span>{m}</span>{/if}
    {/each}
    <svg class="brand" viewBox="0 0 137 16"><text x="0" y="14" textLength="110" lengthAdjust="spacingAndGlyphs">SALOME</text><text x="120" y="14" textLength="17" lengthAdjust="spacingAndGlyphs">9</text></svg>
  </nav>

  {#each rows as r}<div class="toolbar">{@render bar(r)}</div>{/each}

  <main>
    <section class="browser">
      <div class="caption"><span>Object Browser</span>{@render dock()}</div>
      <div class="tree">
        <div class="head"><div class="h0">{@render eye(true)}</div><div class="h1">Name</div></div>
        {#each tree as r}
          <div class="row d{r.d}" class:sel={r.sel} class:ref={!r.i} class:short={r.h === 16}>
            <div class="vis">{#if r.eye}{@render eye(false)}{/if}</div>
            {#if r.i}
              <svg class="arr" viewBox="0 0 10 10">{#if r.a === 'o'}<path d="M.5 3H9.5L5 7.6Z" />{:else if r.a === 'c'}<path d="M3 .5V9.5L7.6 5Z" />{/if}</svg>
              <svg class="ti" viewBox="0 0 16 16">{@html T[r.i]}</svg>
            {/if}
            <span>{r.n}</span>
          </div>
        {/each}
      </div>
      <div class="tabs"><div class="tab cur">Object Browser</div><div class="tab">NoteBook</div></div>
    </section>

    <div class="grip"><svg viewBox="0 0 2 18"><path d="M1 0V18" stroke="#aaa" stroke-width="1.5" stroke-dasharray="1.5 2.2" /></svg></div>

    <section class="work">
      <div class="wtabs"><div class="w1"></div><div class="w2">VTK scene:1 - viewer:1</div><div class="wx"><svg viewBox="0 0 11 11"><rect x=".5" y=".5" width="10" height="10" rx="2" fill="none" stroke="#555" /><path d="M3 3L8 8M8 3L3 8" stroke="#555" stroke-width="1.8" /></svg></div></div>
      <div class="vbar">{@render bar(vtk)}</div>
      <svg class="scene" viewBox="341 309 1576 651" shape-rendering="crispEdges">
        <path d="M1128.500 634V526" stroke="#00f" stroke-width="1" /><path d="M1126.500 533L1128.500 521L1131 533Z" fill="#00d" />
        <path d="M1129.5 634L1220 582" stroke="#0f0" /><path d="M1216 581L1226 578L1218 586Z" fill="#0a0" />
        <path d="M1129.5 634L1220 687" stroke="#f00" /><path d="M1218 683L1226 690.5L1216 688Z" fill="#d00" />
        <g fill="none"><path d="M1130 515.5H1134.5L1130.5 520" stroke="#00f" /><path d="M1228.5 572L1230.5 575V578M1232.5 572L1230.5 575" stroke="#0f0" /><path d="M1228.5 686L1232.5 692M1232.5 686L1228.5 692" stroke="#f00" /></g>
        <path d="M421.5 879V849" stroke="#00d" /><path d="M418 849L421.5 839L425 849Z" fill="#00e" />
        <path d="M422 879L446 865" stroke="#0f0" /><path d="M443 862L451 862L445 868Z" fill="#090" />
        <path d="M422 879L449 894" stroke="#f00" /><path d="M449 892L456 899L447 897Z" fill="#e00" />
        <g fill="none"><path d="M424 837.5H431.5L424.5 847.5H432" stroke="#00f" /><path d="M447.5 856L451 860.5V866M455 856L451 860.5" stroke="#0f0" /><path d="M452 885L459.5 895M459.5 885L452 895" stroke="#f00" /></g>
      </svg>
    </section>
  </main>

  <div class="hgrip"><i></i></div>
  <div class="caption pc"><span>Python Console</span>{@render dock()}</div>
  <div class="console">&gt;&gt;&gt;</div>
</div>

<div class="dialog">
  <div class="dtitle"><span>Create Groups from Geometry</span><svg viewBox="0 0 10 10"><path d="M1.5 1.5L8.5 8.5M8.5 1.5L1.5 8.5" stroke="#2e3436" stroke-width="2" /></svg></div>
  <div class="dbody">
    <div class="line"><span>Mesh</span>{@render pick('focus')}<div class="edit">Mesh_1</div></div>
    <div class="glabel">Elements</div>
    <div class="group"><span>Geometry</span>{@render pick('down')}<div class="list">{#each picked as n}<div>{n}</div>{/each}</div></div>
    <div class="glabel second">Nodes</div>
    <div class="group"><span>Geometry</span>{@render pick('')}<div class="list"></div></div>
    <div class="btns">
      <div class="btn">A<u>p</u>ply and Close</div><div class="btn"><u>A</u>pply</div><div class="btn far">C<u>l</u>ose</div><div class="btn"><u>H</u>elp</div>
    </div>
  </div>
</div>

<style>
  :global(body) { margin: 0; background: #000; }
  :global(#app) { position: relative; width: 1920px; height: 1080px; overflow: hidden; }
  svg { display: block; flex: none; overflow: visible; }
  u { text-decoration: none; box-shadow: 0 1px 0 #111; }
  i { display: block; flex: none; }
  .defs { position: absolute; width: 0; height: 0; }
  .screen { display: flex; flex-direction: column; width: 1920px; height: 1080px; font: 12px/16px 'DejaVu Sans', sans-serif; color: #111; background: #efebe7; white-space: nowrap; }

  .top { display: flex; align-items: center; height: 27px; flex: none; background: #000; color: #d3d3cf; font: bold 13.3px/27px 'Noto Sans', sans-serif; }
  .top span { padding-top: 1px; }
  .act { width: 66px; margin-left: 12px; letter-spacing: 0.5px; }
  .app { width: 16px; height: 18px; margin-left: 34px; }
  .appname { width: 53px; margin-left: 6px; letter-spacing: 0.3px; }
  .tri { width: 0; height: 0; border: 5px solid transparent; border-top-color: #d3d3cf; border-bottom: 0; }
  .appname + .tri { margin-left: 3px; }
  .clock { display: flex; align-items: center; width: 130px; margin-left: 706px; }
  .clock span { width: 122px; letter-spacing: 0.35px; }
  .clock i { width: 8px; height: 8px; border-radius: 50%; background: #d3d3cf; }
  .tray { display: flex; align-items: center; margin-left: 580px; }
  .a11y { width: 16px; height: 16px; margin-right: 10px; }
  .lang { width: 26px; margin: 0 4px 0 27px; }
  .lang sub { font-size: 9px; line-height: 1; }
  .wifi { width: 15px; height: 16px; margin-left: 32px; }
  .vol { width: 16px; height: 16px; margin-left: 12px; }
  .mic { width: 14px; height: 16px; margin-left: 13px; }
  .bat { width: 12px; height: 16px; margin-left: 15px; }
  .pct { width: 34px; margin: 0 5px 0 7px; font-size: 12px; }

  .title { display: flex; align-items: center; height: 36px; flex: none; padding-left: 877px; background: #f6f5f3; border-radius: 7px 7px 0 0; border-bottom: 1px solid #d0ccc8; color: #929595; font: bold 13.3px/36px 'Noto Sans', sans-serif; }
  .title span { width: 953px; padding-top: 2px; }
  .title svg { width: 80px; height: 12px; }
  .menu { display: flex; align-items: center; height: 19px; flex: none; padding-left: 10px; gap: 14.8px; border-bottom: 1px solid #cac6c2; }
  .brand { width: 137px; height: 16px; margin-left: auto; }
  .brand text { font: bold 16.5px 'DejaVu Sans', sans-serif; fill: #cbcbcb; }

  .toolbar { display: flex; align-items: center; height: 38px; flex: none; border-bottom: 1px solid #b5b2ae; background: linear-gradient(#f8f5f1, #edeae5); }
  .toolbar:nth-of-type(5) { height: 37px; }
  .handle { display: flex; width: 16px; height: 20px; }
  .handle::before { content: ''; width: 5px; height: 19px; margin-left: 8px; background: radial-gradient(circle at 1px 1px, #b5b1ad 0.7px, transparent 1px) 0 0 / 3px 3px; }
  .handle:first-child { width: 12.5px; }
  .handle:first-child::before { margin-left: 4px; }
  .sep { width: 7px; height: 20px; background: linear-gradient(#d0ccc7, #d0ccc7) 3px 0 / 1px 100% no-repeat; }
  .tool { display: flex; align-items: center; justify-content: center; width: 33px; height: 31px; flex: none; box-sizing: border-box; }
  .tool.on { border: 1px solid #b3afab; border-radius: 3px; background: #dcd8d5; }
  .ic { width: 20px; height: 20px; filter: drop-shadow(1px 1px 0.8px rgba(0, 0, 0, 0.55)); font-family: 'DejaVu Sans', sans-serif; }
  .combo { display: flex; align-items: center; width: 133px; height: 24px; box-sizing: border-box; padding: 0 6px 1px; border: 1px solid #b5b2ae; border-radius: 3px; background: linear-gradient(#fff, #f1efed); }
  .ci { width: 14px; height: 14px; }
  .combo span { flex: 1; margin-left: 4px; }
  .caret, .drop { width: 0; height: 0; border: 4px solid transparent; border-top: 5px solid #444; border-bottom: 0; }
  .drop { margin: 0 3.5px 0 0; }
  .covered { width: 495px; }

  main { display: flex; height: 723px; flex: none; }
  .browser { display: flex; flex-direction: column; width: 332px; }
  .caption { display: flex; align-items: center; justify-content: space-between; height: 20px; flex: none; padding: 0 2px 0 4px; }
  .dock { width: 25px; height: 11px; }
  .tree { height: 675px; flex: none; border: 1px solid #b5b2ae; background: #fff; }
  .head { display: flex; height: 20px; background: #efebe7; }
  .h0, .h1 { display: flex; align-items: center; box-sizing: border-box; height: 20px; border-bottom: 1px solid #b0aca8; background: linear-gradient(#f7f5f2, #e6e3df); }
  .h0 { width: 26px; padding-left: 4px; border-right: 1px solid #c8c4c0; }
  .h1 { width: 176px; padding-top: 1px; justify-content: center; }
  .eye { width: 14px; height: 10px; opacity: 0.8; }
  .eye.dark { opacity: 1; }
  .row { display: flex; align-items: center; width: 202px; height: 17px; line-height: 17px; }
  .row.short, .row.ref { height: 16px; line-height: 16px; }
  .row > span { margin-top: -1px; }
  .vis { width: 30.5px; flex: none; padding-left: 4px; box-sizing: border-box; }
  .arr { width: 10px; height: 10px; fill: #3c3c3c; }
  .ti { width: 16px; height: 16px; margin: 0 5px 0 8px; }
  .d0 .ti { margin: 0 6px 0 9px; }
  .d1 .arr { margin-left: 20px; }
  .d2 .arr { margin-left: 40px; }
  .d3 .arr { margin-left: 60px; }
  .ref { color: #f00; }
  .ref.d1 span { margin-left: 58.5px; }
  .ref.d2 span { margin-left: 78.5px; }
  .sel { background: #308cc6; color: #fff; }
  .sel .arr { fill: #0e2c40; }
  .sel .eye { opacity: 0.28; filter: brightness(0.3); }
  .sel .ti { opacity: 0.88; }
  .tabs { display: flex; align-items: flex-start; height: 26px; margin-top: 1px; border-top: 1px solid #b5b2ae; }
  .tab { box-sizing: border-box; width: 82px; height: 22px; border: 1px solid #b5b2ae; border-top: 0; border-left: 0; border-radius: 0 0 3px 3px; background: #dcd8d4; text-align: center; line-height: 22px; }
  .tab.cur { width: 117px; height: 25px; margin-top: -1px; border-left: 1px solid #b5b2ae; background: #f6f3ef; line-height: 26px; }
  .grip { display: flex; align-items: center; justify-content: center; width: 6px; }
  .grip svg { width: 2px; height: 18px; }
  .work { display: flex; flex-direction: column; box-sizing: border-box; width: 1580px; margin-top: 1px; border: solid #a09c98; border-width: 2px 0 0 2px; box-shadow: inset 1px 0 #fff; padding: 1px 0 0 1px; border-bottom: 2px solid #fff; }
  .wtabs { display: flex; align-items: flex-start; height: 27px; flex: none; }
  .w1 { box-sizing: border-box; width: 779px; height: 24px; margin-top: 2px; border: 1px solid #b5b2ae; border-radius: 3px 3px 0 0; background: #dcd8d4; }
  .w2 { box-sizing: border-box; width: 774px; height: 26px; border: 1px solid #b5b2ae; border-width: 1px 1px 0 0; border-radius: 0 3px 0 0; background: linear-gradient(#f8f5f1, #efebe7); color: #308cc6; text-align: center; line-height: 26px; }
  .wx { display: flex; align-items: center; justify-content: center; box-sizing: border-box; width: 17px; height: 17px; margin: 5px 0 0 6px; border: 1px solid #b5b2ae; border-radius: 3px; background: #f8f7f5; }
  .wx svg { width: 11px; height: 11px; }
  .vbar { display: flex; align-items: center; box-sizing: border-box; width: 1576px; height: 39px; flex: none; border-bottom: 2px solid #c8c4c0; background: linear-gradient(#f8f5f1, #edeae5); }
  .scene { width: 1576px; height: 651px; background: #000; overflow: hidden; }

  .hgrip { display: flex; align-items: center; justify-content: center; height: 6px; flex: none; padding-left: 3px; }
  .hgrip i { width: 18px; height: 1px; background: repeating-linear-gradient(90deg, #b5b1ad 0 1px, transparent 1px 3px); }
  .pc span { padding-top: 2px; }
  .console { box-sizing: border-box; height: 70px; flex: none; padding: 5px 4px; border: 1px solid #b5b2ae; background: #fff; color: #111; font-size: 16px; line-height: 18px; }

  .dialog { position: absolute; left: 599px; top: 230px; width: 514px; height: 717px; border-radius: 8px 8px 0 0; background: #efebe7; box-shadow: 0 0 0 1px rgba(0, 0, 0, 0.2), 0 3px 9px 1px rgba(0, 0, 0, 0.5); font: 12px/15px 'DejaVu Sans', sans-serif; color: #111; white-space: nowrap; clip-path: inset(-12px -12px 0 -12px); }
  .dtitle { display: flex; align-items: center; box-sizing: border-box; height: 37px; padding-left: 157px; border-radius: 8px 8px 0 0; border-bottom: 1px solid #bfb8b1; background: linear-gradient(#e2dfdc, #d8d4d0); box-shadow: inset 0 1px #f4f2f0; color: #2e3436; font: bold 13.3px/35px 'Noto Sans', sans-serif; }
  .dtitle span { width: 334px; padding-top: 2px; }
  .dtitle svg { width: 10px; height: 10px; }
  .dbody { display: flex; flex-direction: column; }
  .line { display: flex; align-items: center; height: 24px; margin-top: 16px; padding-left: 16px; }
  .line span { width: 38px; padding-top: 1px; }
  .pick { display: flex; align-items: center; justify-content: center; box-sizing: border-box; width: 28px; height: 24px; flex: none; border: 1px solid #b5b2ae; border-radius: 3px; background: linear-gradient(#fdfdfc, #f0eeec); }
  .pick svg { width: 14px; height: 15px; filter: drop-shadow(1px 1px 0.6px rgba(0, 0, 0, 0.45)); }
  .pick.focus { border-color: #2f78a8; background: linear-gradient(#f6fafc, #e2eaee); }
  .pick.down { background: #dcd8d5; }
  .edit { box-sizing: border-box; width: 404px; height: 23px; margin: -1px 0 0 6px; padding-left: 2px; border: 1px solid #b5b2ae; border-radius: 3px; background: #fff; line-height: 22px; }
  .glabel { margin: 8px 0 2px 54px; height: 15px; }
  .glabel.second { margin: 8px 0 2px 54px; }
  .group { display: flex; align-items: flex-start; box-sizing: border-box; width: 444px; height: 273px; margin-left: 54px; padding: 12px 0 0 13px; border: 1px solid #d5d1cd; border-radius: 3px; background: #ebe7e3; }
  .group > span { width: 66px; line-height: 26px; }
  .list { box-sizing: border-box; width: 316px; height: 246px; margin-left: 6px; padding: 1px 3px; border: 1px solid #b5b2ae; background: #fff; }
  .btns { display: flex; gap: 5px; margin: 16px 0 0 5px; }
  .btn { box-sizing: border-box; width: 105px; height: 24px; border: 1px solid #aeaaa6; border-radius: 3px; background: linear-gradient(#fff, #f0eeec); text-align: center; line-height: 22px; }
  .btn.far { margin-left: 69px; }
</style>
